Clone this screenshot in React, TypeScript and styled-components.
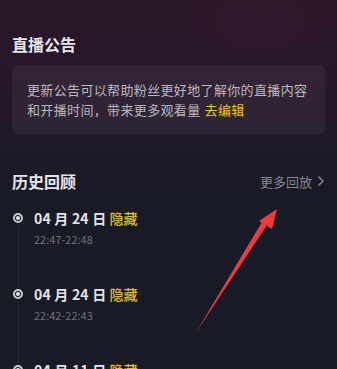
import styled, { createGlobalStyle } from "styled-components";

const GlobalStyle = createGlobalStyle`
  html, body {
    margin: 0;
    padding: 0;
    background: #181a25;
  }
  * {
    box-sizing: border-box;
  }
`;

const Page = styled.div`
  position: relative;
  width: 337px;
  height: 369px;
  overflow: hidden;
  padding: 0 12px;
  font-family: "Noto Sans CJK SC", "Noto Sans", sans-serif;
  background:
    radial-gradient(ellipse 110px 60px at 260px 25px, rgba(80, 28, 62, 0.22), transparent 75%),
    linear-gradient(180deg, #2b1829 0%, #26172a 25%, #1d1a28 42%, #181a25 55%, #181a25 100%);
`;

const SectionTitle = styled.h2`
  margin: 0;
  font-size: 16px;
  line-height: 22px;
  font-weight: 700;
  color: #e6e6ea;
`;

const NoticeTitle = styled(SectionTitle)`
  padding-top: 33px;
`;

const NoticeCard = styled.div`
  margin-top: 10px;
  height: 69px;
  padding: 15px 14px 0 15px;
  border-radius: 6px;
  background: rgba(255, 255, 255, 0.055);
  font-size: 13px;
  line-height: 20px;
  letter-spacing: 0.35px;
  color: #b9b8c0;
`;

const EditLink = styled.span`
  color: #f1c619;
  margin-left: 4px;
`;

const HistoryHeader = styled.div`
  margin-top: 36px;
  display: flex;
  align-items: center;
  justify-content: space-between;
`;

const MoreLink = styled.div`
  display: flex;
  align-items: center;
  gap: 5px;
  font-size: 13px;
  color: #85858d;
`;

const Timeline = styled.div`
  margin-top: 17px;
  display: flex;
  flex-direction: column;
`;

const Item = styled.div`
  position: relative;
  height: 76px;
  padding-left: 22px;
`;

const Dot = styled.span`
  position: absolute;
  left: 1px;
  top: 4px;
  width: 10px;
  height: 10px;
  border-radius: 50%;
  border: 2px solid #c9c9cf;
  background: #181a25;
  &::after {
    content: "";
    position: absolute;
    left: 1px;
    top: 1px;
    width: 4px;
    height: 4px;
    border-radius: 50%;
    background: #e6e6ea;
  }
`;

const Line = styled.span`
  position: absolute;
  left: 5.5px;
  top: 17px;
  bottom: -2px;
  border-left: 1px dotted #343644;
`;

const DateRow = styled.div`
  font-size: 14px;
  line-height: 18px;
  font-weight: 700;
  color: #e3e3e8;
  letter-spacing: 0.2px;
`;

const Hidden = styled.span`
  color: #e8bf1c;
  font-weight: 500;
  margin-left: 3px;
`;

const TimeRange = styled.div`
  margin-top: 5px;
  font-size: 11px;
  line-height: 14px;
  color: #6f707a;
`;

const Arrow = styled.svg`
  position: absolute;
  left: 0;
  top: 0;
  pointer-events: none;
`;

const items = [
  { date: "04 月 24 日", time: "22:47-22:48" },
  { date: "04 月 24 日", time: "22:42-22:43" },
  { date: "04 月 11 日", time: "21:10-21:12" },
];

export default function App() {
  return (
    <>
      <GlobalStyle />
      <Page>
        <NoticeTitle>直播公告</NoticeTitle>
        <NoticeCard>
          更新公告可以帮助粉丝更好地了解你的直播内容
          <br />
          和开播时间，带来更多观看量
          <EditLink>去编辑</EditLink>
        </NoticeCard>

        <HistoryHeader>
          <SectionTitle>历史回顾</SectionTitle>
          <MoreLink>
            更多回放
            <svg width="8" height="12" viewBox="0 0 8 12">
              <path d="M1.5 1.5 L6 6 L1.5 10.5" fill="none" stroke="#85858d" strokeWidth="1.5" />
            </svg>
          </MoreLink>
        </HistoryHeader>

        <Timeline>
          {items.map((it, i) => (
            <Item key={i}>
              <Dot />
              {i < items.length - 1 && <Line />}
              <DateRow>
                {it.date}
                <Hidden>隐藏</Hidden>
              </DateRow>
              <TimeRange>{it.time}</TimeRange>
            </Item>
          ))}
        </Timeline>

        <Arrow width="337" height="369" viewBox="0 0 337 369">
          <path d="M195 334 L262 222 L267 225 Z" fill="#ee3a3c" />
          <path d="M277 209 L259 221 L272 229 Z" fill="#ee3a3c" />
        </Arrow>
      </Page>
    </>
  );
}
